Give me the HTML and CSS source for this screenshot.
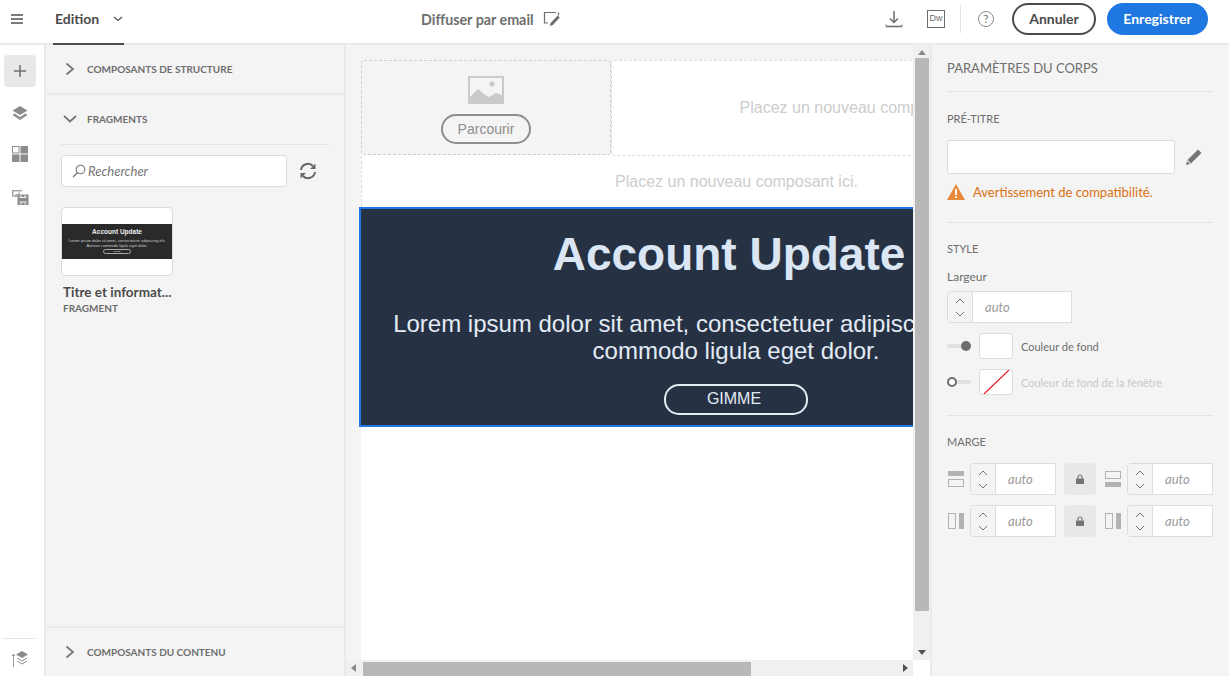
FILE: index.html
```html
<!DOCTYPE html>
<html lang="fr">
<head>
<meta charset="utf-8">
<title>Edition</title>
<link rel="stylesheet" href="styles.css">
</head>
<body>
<header class="topbar">
  <div class="top-left">
    <svg class="burger" width="14" height="12" viewBox="0 0 14 12"><path d="M1 2h12M1 6h12M1 10h12" stroke="#505050" stroke-width="1.6"/></svg>
    <div class="tab"><span>Edition</span><svg width="10" height="6" viewBox="0 0 10 6"><path d="M1 1l4 3.500L9 1" fill="none" stroke="#505050" stroke-width="1.200"/></svg></div>
  </div>
  <div class="top-title"><span>Diffuser par email</span>
    <svg width="18" height="18" viewBox="0 0 18 18"><path d="M13 2.500H1.500V13H5" fill="none" stroke="#6e6e6e" stroke-width="1.200"/><path d="M15.500 2.500v3" stroke="#6e6e6e" stroke-width="1.200"/><path d="M14.800 5.500l2 2-7 7.500-3 1 .8-3z" fill="#6e6e6e"/></svg>
  </div>
  <div class="top-actions">
    <svg class="i-dl" width="18" height="18" viewBox="0 0 18 18"><path d="M9 1v11M5 8.500l4 4 4-4" fill="none" stroke="#6e6e6e" stroke-width="1.500"/><path d="M1 16.500h16" stroke="#6e6e6e" stroke-width="1.600"/><path d="M1 14.500v2M17 14.500v2" stroke="#6e6e6e"/></svg>
    <span class="dw">Dw</span>
    <i class="vsep"></i>
    <span class="help">?</span>
    <button class="btn btn-cancel">Annuler</button>
    <button class="btn btn-save">Enregistrer</button>
  </div>
</header>

<div class="main">
  <nav class="rail">
    <div class="rail-top">
      <div class="rail-btn active"><svg width="14" height="14" viewBox="0 0 14 14"><path d="M7 1v12M1 7h12" stroke="#6e6e6e" stroke-width="1.500"/></svg></div>
      <div class="rail-btn"><svg width="16" height="16" viewBox="0 0 16 16"><path d="M8 1l7.500 4.500L8 10 .5 5.500z" fill="#8c8c8c"/><path d="M2.500 8.500L.5 10 8 15l7.500-5-2-1.500L8 12z" fill="#8c8c8c"/></svg></div>
      <div class="rail-btn"><svg width="16" height="16" viewBox="0 0 16 16"><rect x=".5" y=".5" width="6.500" height="6.500" fill="#fff" stroke="#8c8c8c"/><rect x="8.500" width="7.500" height="7.500" fill="#8c8c8c"/><rect y="8.500" width="7.500" height="7.500" fill="#8c8c8c"/><rect x="8.500" y="8.500" width="7.500" height="7.500" fill="#8c8c8c"/></svg></div>
      <div class="rail-btn"><svg width="18" height="16" viewBox="0 0 18 16"><path d="M1 1h10v1.500H2.500V8H1z" fill="#a5a5a5"/><path d="M3 7l2.500-2.500L7 6l-1 2H3z" fill="#a5a5a5"/><circle cx="8" cy="4.500" r="1" fill="#a5a5a5"/><rect x="6.500" y="5.500" width="11" height="10.500" fill="#8c8c8c"/><path d="M8.500 8.500h7M8.500 13h7M10 6v2M14 6v2M10 13.500v2M14 13.500v2" stroke="#f4f4f4"/></svg></div>
    </div>
    <div class="rail-bottom">
      <svg width="18" height="18" viewBox="0 0 18 18"><path d="M2.500 4v13M1 6l1.500-2L4 6" fill="none" stroke="#9a9a9a"/><path d="M11 1l6 3.500L11 8 5 4.500z" fill="#8c8c8c"/><path d="M6 8l5 3 5-3M6 11l5 3 5-3" fill="none" stroke="#8c8c8c"/></svg>
    </div>
  </nav>

  <aside class="panel">
    <div class="acc acc-closed">
      <svg class="chev" width="10" height="14" viewBox="0 0 10 14"><path d="M1.500 1.500L8 7l-6.500 5.500" fill="none" stroke="#757575" stroke-width="1.700"/></svg>
      <span>COMPOSANTS DE STRUCTURE</span>
    </div>
    <section class="frag">
      <div class="acc-open">
        <svg class="chev-d" width="14" height="10" viewBox="0 0 14 10"><path d="M1 2l6 5.500L13 2" fill="none" stroke="#757575" stroke-width="1.700"/></svg>
        <span>FRAGMENTS</span>
      </div>
      <div class="search-row">
        <div class="search">
          <svg width="14" height="14" viewBox="0 0 14 14"><circle cx="8.500" cy="5.500" r="4.300" fill="none" stroke="#757575" stroke-width="1.100"/><path d="M5.500 8.500L1 13" stroke="#757575" stroke-width="1.300"/></svg>
          <span>Rechercher</span>
        </div>
        <svg class="refresh" width="18" height="18" viewBox="0 0 18 18"><path d="M2 8a7 7 0 0 1 12-4" fill="none" stroke="#666" stroke-width="2"/><path d="M16 10a7 7 0 0 1-12 4" fill="none" stroke="#666" stroke-width="2"/><path d="M16.500 1.500v5.500H11zM1.500 16.500V11H7z" fill="#666"/></svg>
      </div>
      <div class="card">
        <div class="thumb">
          <div class="thumb-band">
            <b>Account Update</b>
            <p>Lorem ipsum dolor sit amet, consectetuer adipiscing elit. Aenean commodo ligula eget dolor.</p>
            <em>GIMME</em>
          </div>
        </div>
        <div class="card-title">Titre et informat...</div>
        <div class="card-sub">FRAGMENT</div>
      </div>
    </section>
    <div class="acc acc-bottom">
      <svg class="chev" width="10" height="14" viewBox="0 0 10 14"><path d="M1.500 1.500L8 7l-6.500 5.500" fill="none" stroke="#757575" stroke-width="1.700"/></svg>
      <span>COMPOSANTS DU CONTENU</span>
    </div>
  </aside>

  <main class="canvas">
    <div class="viewport">
      <div class="email">
        <div class="row-top">
          <div class="drop-img">
            <svg width="36" height="28" viewBox="0 0 36 28"><rect width="36" height="28" rx="1" fill="#cacaca"/><rect x="2" y="2" width="32" height="24" fill="#f4f4f4"/><circle cx="24" cy="8" r="2.500" fill="#cacaca"/><path d="M2 21l8-8 7 6 4 2 7-4 6 2v7H2z" fill="#cacaca"/></svg>
            <span class="browse">Parcourir</span>
          </div>
          <div class="drop-txt">Placez un nouveau composant ici.</div>
        </div>
        <div class="drop-row">Placez un nouveau composant ici.</div>
        <div class="hero">
          <h1>Account Update</h1>
          <p>Lorem ipsum dolor sit amet, consectetuer adipiscing elit. Aenean commodo ligula eget dolor.</p>
          <span class="gimme">GIMME</span>
        </div>
      </div>
    </div>
    <div class="vbar">
      <svg width="8" height="5" viewBox="0 0 8 5"><path d="M4 0l4 5H0z" fill="#8a8a8a"/></svg>
      <div class="vthumb"></div>
      <svg width="8" height="5" viewBox="0 0 8 5"><path d="M4 5l4-5H0z" fill="#505050"/></svg>
    </div>
    <div class="hbar">
      <svg width="5" height="8" viewBox="0 0 5 8"><path d="M0 4l5-4v8z" fill="#8a8a8a"/></svg>
      <div class="htrack"><div class="hthumb"></div></div>
      <svg width="5" height="8" viewBox="0 0 5 8"><path d="M5 4L0 0v8z" fill="#505050"/></svg>
    </div>
    <div class="corner"></div>
  </main>

  <aside class="props">
    <section class="sec sec-head"><h2>PARAMÈTRES DU CORPS</h2></section>
    <section class="sec sec-pre">
      <h3>PRÉ-TITRE</h3>
      <div class="pre-row">
        <div class="text-in"></div>
        <svg width="18" height="18" viewBox="0 0 18 18"><path d="M13 1.500l3.500 3.500L6 15.500l-3.500-3.500z" fill="#757575"/><path d="M2 13l3 3-4 1z" fill="#757575"/></svg>
      </div>
      <div class="warn">
        <svg width="18" height="16" viewBox="0 0 18 16"><path d="M9 0l9 16H0z" fill="#e68a3c"/><path d="M9 5v6M9 12.200v1.800" stroke="#fff" stroke-width="1.800"/></svg>
        <span>Avertissement de compatibilité.</span>
      </div>
    </section>
    <section class="sec sec-style">
      <h3>STYLE</h3>
      <div class="lbl">Largeur</div>
      <div class="num num-wide"><div class="spin"><svg width="10" height="6" viewBox="0 0 10 6"><path d="M1 5l4-4 4 4" fill="none" stroke="#757575"/></svg><svg width="10" height="6" viewBox="0 0 10 6"><path d="M1 1l4 4 4-4" fill="none" stroke="#757575"/></svg></div><div class="val">auto</div></div>
      <div class="color-row">
        <span class="tog on"><i></i></span><span class="swatch"></span><span class="clabel">Couleur de fond</span>
      </div>
      <div class="color-row">
        <span class="tog off"><i></i></span><span class="swatch"><svg width="32" height="24" viewBox="0 0 32 24"><path d="M4 24L29 0" stroke="#e8192c" stroke-width="1.200"/></svg></span><span class="clabel dim">Couleur de fond de la fenêtre</span>
      </div>
    </section>
    <section class="sec sec-margin">
      <h3>MARGE</h3>
      <div class="m-row">
        <svg class="m-ic" width="16" height="16" viewBox="0 0 16 16"><rect width="16" height="5" fill="#b3b3b3"/><rect x=".5" y="8.500" width="15" height="7" fill="none" stroke="#b3b3b3"/></svg>
        <div class="num"><div class="spin"><svg width="10" height="6" viewBox="0 0 10 6"><path d="M1 5l4-4 4 4" fill="none" stroke="#757575"/></svg><svg width="10" height="6" viewBox="0 0 10 6"><path d="M1 1l4 4 4-4" fill="none" stroke="#757575"/></svg></div><div class="val">auto</div></div>
        <div class="lock"><svg width="10" height="10" viewBox="0 0 10 10"><path d="M3 4.500V3a2 2 0 0 1 4 0v1.500" fill="none" stroke="#757575" stroke-width="1.200"/><rect x="1" y="4.500" width="8" height="5.500" rx=".5" fill="#757575"/></svg></div>
        <svg class="m-ic" width="16" height="16" viewBox="0 0 16 16"><rect y="11" width="16" height="5" fill="#b3b3b3"/><rect x=".5" y=".5" width="15" height="7" fill="none" stroke="#b3b3b3"/></svg>
        <div class="num"><div class="spin"><svg width="10" height="6" viewBox="0 0 10 6"><path d="M1 5l4-4 4 4" fill="none" stroke="#757575"/></svg><svg width="10" height="6" viewBox="0 0 10 6"><path d="M1 1l4 4 4-4" fill="none" stroke="#757575"/></svg></div><div class="val">auto</div></div>
      </div>
      <div class="m-row">
        <svg class="m-ic" width="16" height="16" viewBox="0 0 16 16"><rect x="11" width="5" height="16" fill="#b3b3b3"/><rect x=".5" y=".5" width="7" height="15" fill="none" stroke="#b3b3b3"/></svg>
        <div class="num"><div class="spin"><svg width="10" height="6" viewBox="0 0 10 6"><path d="M1 5l4-4 4 4" fill="none" stroke="#757575"/></svg><svg width="10" height="6" viewBox="0 0 10 6"><path d="M1 1l4 4 4-4" fill="none" stroke="#757575"/></svg></div><div class="val">auto</div></div>
        <div class="lock"><svg width="10" height="10" viewBox="0 0 10 10"><path d="M3 4.500V3a2 2 0 0 1 4 0v1.500" fill="none" stroke="#757575" stroke-width="1.200"/><rect x="1" y="4.500" width="8" height="5.500" rx=".5" fill="#757575"/></svg></div>
        <svg class="m-ic" width="16" height="16" viewBox="0 0 16 16"><rect x="11" width="5" height="16" fill="#b3b3b3"/><rect x=".5" y=".5" width="7" height="15" fill="none" stroke="#b3b3b3"/></svg>
        <div class="num"><div class="spin"><svg width="10" height="6" viewBox="0 0 10 6"><path d="M1 5l4-4 4 4" fill="none" stroke="#757575"/></svg><svg width="10" height="6" viewBox="0 0 10 6"><path d="M1 1l4 4 4-4" fill="none" stroke="#757575"/></svg></div><div class="val">auto</div></div>
      </div>
    </section>
  </aside>
</div>
</body>
</html>
```
FILE: styles.css
```css
* { box-sizing: border-box; }
html, body { margin: 0; height: 100%; overflow: hidden; }
body {
  display: flex;
  flex-direction: column;
  width: 1229px;
  height: 676px;
  font-family: "Lato", "Noto Sans", sans-serif;
  color: #4b4b4b;
  background: #fff;
}
svg { display: block; flex: none; }

/* top bar */
.topbar {
  flex: none;
  height: 45px;
  display: grid;
  grid-template-columns: 421px auto 1fr;
  align-items: center;
  background: #fff;
  border-bottom: 2px solid #eaeaea;
}
.top-left { display: flex; align-items: center; height: 43px; }
.burger { margin: 0 0 5px 10px; }
.tab {
  display: flex;
  align-items: center;
  gap: 14px;
  width: 71px;
  height: 45px;
  margin: 2px 0 0 29px;
  padding: 0 0 6px 2px;
  white-space: nowrap;
  border-bottom: 2px solid #4b4b4b;
  font-size: 14px;
  font-weight: 700;
  color: #4b4b4b;
}
.top-title {
  display: flex;
  align-items: center;
  gap: 9px;
  padding-bottom: 5px;
  font-size: 14.300px;
  font-weight: 700;
  color: #6e6e6e;
}
.top-actions {
  display: flex;
  align-items: center;
  justify-content: flex-end;
  padding: 0 21px 6px 0;
}
.dw {
  width: 18px;
  height: 18px;
  margin-left: 24px;
  border: 1.500px solid #6e6e6e;
  font: 9px/15px "Liberation Sans", sans-serif;
  text-align: center;
  color: #6e6e6e;
}
.vsep { width: 1px; height: 28px; margin: 0 17px 0 15px; background: #e4e4e4; }
.help {
  width: 16px;
  height: 16px;
  border: 1px solid #8a8a8a;
  border-radius: 50%;
  font-size: 11px;
  line-height: 14px;
  text-align: center;
  color: #6e6e6e;
}
.btn {
  height: 32px;
  border-radius: 16px;
  font: 700 14px "Lato", sans-serif;
  padding: 0;
}
.btn-cancel { width: 84px; margin-left: 18px; background: #fff; border: 2px solid #4b4b4b; color: #4b4b4b; }
.btn-save { width: 101px; margin-left: 11px; background: #1f78e1; border: 2px solid #1f78e1; color: #fff; }

/* main */
.main { flex: 1; display: flex; min-height: 0; }
.rail {
  flex: none;
  width: 44px;
  display: flex;
  flex-direction: column;
  justify-content: space-between;
  background: #fff;
}
.rail-top { display: flex; flex-direction: column; align-items: center; padding: 10px 4px 0 0; gap: 9.600px; }
.rail-btn { width: 32px; height: 32px; display: flex; align-items: center; justify-content: center; border-radius: 4px; }
.rail-btn:last-child { margin-top: 1px; }
.rail-btn.active { background: #e8e8e8; }
.rail-bottom {
  margin: 0 9px 0 3px;
  padding: 11px 0 8px 8px;
  border-top: 1px solid #e4e4e4;
}

/* left panel */
.panel {
  flex: none;
  width: 302px;
  display: flex;
  flex-direction: column;
  background: #f4f4f4;
  border-left: 2px solid #eaeaea;
  border-right: 2px solid #eaeaea;
}
.acc {
  flex: none;
  display: flex;
  align-items: center;
  gap: 12px;
  padding-left: 19px;
  font-size: 10px;
  font-weight: 700;
  color: #6e6e6e;
}
.acc-closed { height: 50px; border-bottom: 2px solid #eaeaea; }
.acc-bottom { height: 50px; border-top: 2px solid #eaeaea; }
.frag { flex: 1; padding: 0 15px; min-height: 0; }
.acc-open {
  display: flex;
  align-items: center;
  gap: 10px;
  height: 50px;
  padding: 0 0 1px 2px;
  font-size: 10px;
  font-weight: 700;
  color: #6e6e6e;
  border-bottom: 1px solid #e4e4e4;
}
.search-row { display: flex; align-items: center; margin-top: 10px; }
.search {
  display: flex;
  align-items: center;
  gap: 2px;
  width: 226px;
  height: 32px;
  padding-left: 10px;
  background: #fff;
  border: 1px solid #dcdcdc;
  border-radius: 4px;
  font-size: 13px;
  font-style: italic;
  color: #757575;
}
.refresh { margin-left: 12px; }
.card { width: 112px; margin-top: 20px; }
.thumb {
  height: 69px;
  display: flex;
  align-items: center;
  background: #fff;
  border: 1px solid #dcdcdc;
  border-radius: 4px;
  overflow: hidden;
}
.thumb-band {
  width: 100%;
  height: 35px;
  padding-top: 4px;
  background: #2a2a2a;
  color: #eee;
  text-align: center;
  font-family: "Liberation Sans", sans-serif;
}
.thumb-band b { display: block; font-size: 6.500px; line-height: 8px; }
.thumb-band p { margin: 2px 0 1px; font-size: 3.900px; line-height: 5px; color: #ccc; }
.thumb-band em { display: block; width: 28px; height: 5px; margin: 0 auto; border: 1px solid #aaa; border-radius: 3px; font-size: 2px; line-height: 3px; font-style: normal; }
.card-title { margin-top: 8px; padding-left: 2px; font-size: 13.500px; font-weight: 700; line-height: 17px; color: #4b4b4b; white-space: nowrap; }
.card-sub { padding-left: 2px; font-size: 10px; font-weight: 700; line-height: 14px; color: #6e6e6e; }

/* canvas */
.canvas {
  flex: none;
  width: 584px;
  display: grid;
  grid-template-columns: 1fr 17px;
  grid-template-rows: 1fr 16px;
  background: #f4f4f4;
  min-height: 0;
}
.viewport {
  margin-left: 13px;
  padding: 15px 0 0 2px;
  overflow: hidden;
  min-width: 0;
  min-height: 0;
  background:
    linear-gradient(to right, #f4f4f4 2px, transparent 2px),
    linear-gradient(#f4f4f4 15px, #fff 15px);
}
.email {
  width: 750px;
  font-family: "Liberation Sans", sans-serif;
}
.row-top { display: flex; height: 96px; }
.drop-img {
  flex: none;
  width: 250px;
  height: 95px;
  display: flex;
  flex-direction: column;
  align-items: center;
  padding-top: 15px;
  gap: 10px;
  background: #f4f4f4;
  border: 1px dashed #cfcfcf;
  border-radius: 3px;
}
.browse {
  width: 90px;
  height: 30px;
  border: 2px solid #8e8e8e;
  border-radius: 15px;
  font-size: 14px;
  line-height: 26px;
  text-align: center;
  color: #8e8e8e;
}
.drop-txt {
  flex: 1;
  display: flex;
  align-items: center;
  justify-content: center;
  border: 1px dashed #dcdcdc;
  border-radius: 3px;
  font-size: 16px;
  color: #cdcdcd;
}
.drop-row {
  height: 51px;
  display: flex;
  align-items: center;
  justify-content: center;
  font-size: 16px;
  color: #cdcdcd;
  border-left: 1px dashed #dcdcdc;
  padding-top: 1px;
}
.hero {
  height: 220px;
  margin-left: -2px;
  width: 752px;
  display: flex;
  flex-direction: column;
  align-items: center;
  padding-top: 18px;
  background: #263244;
  border: 2px solid #1f78e1;
  border-right: 0;
  text-align: center;
  color: #e3ebf5;
}
.hero h1 { margin: 0 0 0 -14px; font-size: 46px; line-height: 54px; font-weight: 700; color: #dbe6f5; }
.hero p { margin: 29px 0 0; width: 700px; font-size: 24px; line-height: 27px; }
.gimme {
  width: 144px;
  height: 31px;
  margin-top: 20px;
  padding-right: 4px;
  border: 2px solid #e3ebf5;
  border-radius: 15px;
  font-size: 16px;
  line-height: 26px;
}

.vbar {
  display: flex;
  flex-direction: column;
  align-items: center;
  padding: 5px 0;
  background: #f0f0f0;
  min-height: 0;
}
.vthumb { width: 14px; flex: none; height: 553px; margin: 3px 0 auto; background: #b8b8b8; }
.hbar {
  display: flex;
  align-items: center;
  padding: 0 5px;
  background: #f0f0f0;
}
.htrack { flex: 1; height: 14px; margin: 2px 4px 0 7px; }
.hthumb { width: 388px; height: 14px; background: #b8b8b8; }
.corner { background: #fff; }

/* right panel */
.props {
  flex: 1;
  min-width: 0;
  padding: 0 16px 0 15px;
  background: #f4f4f4;
  border-left: 2px solid #eaeaea;
  font-size: 12px;
  color: #6e6e6e;
}
.sec { border-bottom: 1px solid #e4e4e4; }
.sec-head { height: 47px; padding-top: 14px; }
.props h2 { margin: 0; font-size: 13px; line-height: 18px; font-weight: 400; color: #6e6e6e; }
.props h3 { margin: 0; font-size: 11px; line-height: 14px; font-weight: 400; color: #6e6e6e; }
.sec-pre { height: 131px; padding-top: 20px; }
.pre-row { display: flex; align-items: center; gap: 10px; margin-top: 14px; }
.text-in { width: 228px; height: 34px; background: #fff; border: 1px solid #dcdcdc; border-radius: 3px; }
.warn { display: flex; align-items: center; gap: 8px; margin-top: 10px; font-size: 13px; color: #d9700f; line-height: 16px; }
.sec-style { height: 193px; padding-top: 19px; }
.lbl { margin-top: 13px; font-size: 12px; line-height: 15px; }
.num { display: flex; width: 86px; height: 32px; background: #fff; border: 1px solid #dcdcdc; border-radius: 4px 0 0 4px; }
.num-wide { width: 125px; margin-top: 7px; }
.spin {
  flex: none;
  width: 25px;
  display: flex;
  flex-direction: column;
  align-items: center;
  justify-content: center;
  gap: 7px;
  background: #f4f4f4;
  border-right: 1px solid #dcdcdc;
  border-radius: 3px 0 0 3px;
}
.val { flex: 1; padding-left: 12px; font-size: 13px; line-height: 30px; font-style: italic; color: #9a9a9a; }
.color-row { display: flex; align-items: center; height: 26px; margin-top: 10px; }
.tog { position: relative; flex: none; width: 24px; height: 4px; margin-right: 8px; background: #e2e2e2; border-radius: 2px; }
.tog i { position: absolute; top: -3px; width: 10px; height: 10px; border-radius: 50%; }
.tog.on i { right: 0; background: #6e6e6e; }
.tog.off i { left: 0; background: #fff; border: 2px solid #6e6e6e; }
.swatch { flex: none; width: 34px; height: 26px; background: #fff; border: 1px solid #dcdcdc; border-radius: 3px; overflow: hidden; }
.clabel { margin-left: 8px; font-size: 11px; color: #6e6e6e; }
.clabel.dim { color: #c8c8c8; }
.sec-margin { padding-top: 19px; border-bottom: 0; }
.m-row { display: flex; align-items: center; margin-top: 10px; }
.sec-margin h3 + .m-row { margin-top: 14px; }
.m-ic { margin: 0 6px 0 1px; }
.lock { width: 32px; height: 32px; margin: 0 8px; display: flex; align-items: center; justify-content: center; background: #e8e8e8; border-radius: 4px; }
```
